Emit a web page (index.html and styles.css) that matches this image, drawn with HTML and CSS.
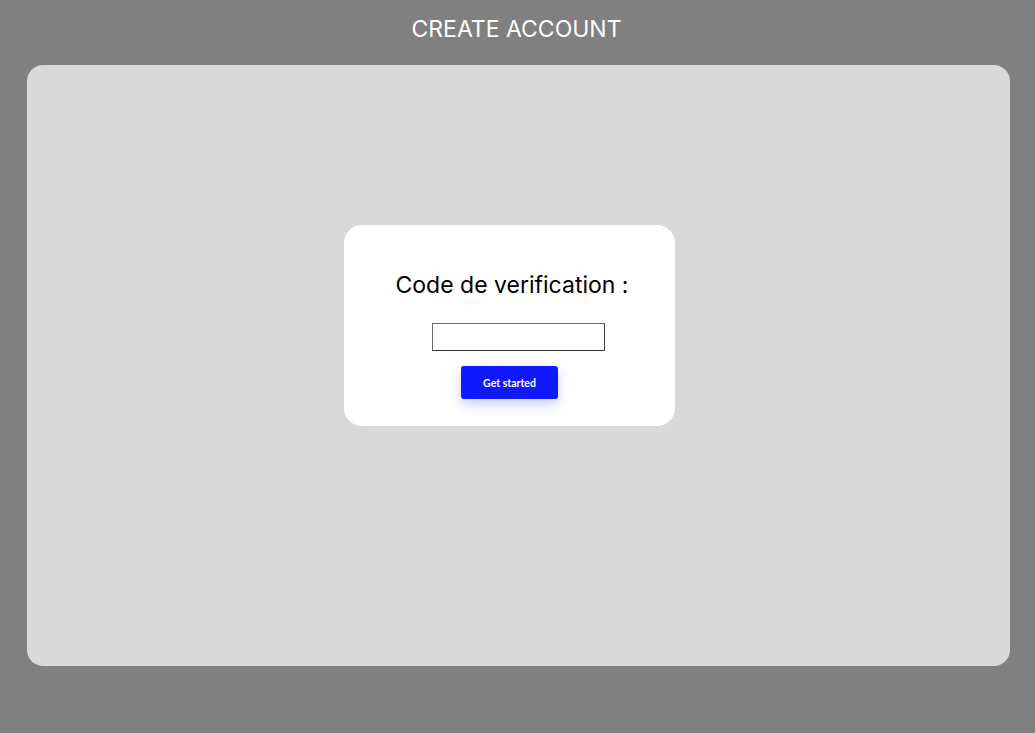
FILE: index.html
```html
<!DOCTYPE html>
<html lang="fr">
<head>
<meta charset="utf-8">
<title>Create account</title>
<link rel="stylesheet" href="styles.css">
</head>
<body>
<div class="page">
  <h1 class="title">CREATE ACCOUNT</h1>
  <main class="panel">
    <form class="card">
      <h2 class="card-heading">Code de verification :</h2>
      <input class="code-input" type="text" aria-label="Code de verification">
      <button class="btn" type="button">Get started</button>
    </form>
  </main>
</div>
</body>
</html>
```

FILE: styles.css
```css
* { box-sizing: border-box; }
html, body { margin: 0; padding: 0; }
body {
  background: #808080;
  font-family: Inter, "Noto Sans", sans-serif;
  width: 1035px;
  height: 733px;
  overflow: hidden;
}
.page {
  display: flex;
  flex-direction: column;
  padding: 15px 25px 0 27px;
}
.title {
  margin: 0;
  font-family: Inter, sans-serif;
  font-weight: 400;
  font-size: 23px;
  line-height: 28px;
  color: #ffffff;
  text-align: center;
  margin-left: -4px;
}
.panel {
  margin-top: 22px;
  height: 601px;
  background: #d9d9d9;
  border-radius: 16px;
  padding: 160px 0 0 317px;
}
.card {
  width: 331px;
  height: 201px;
  background: #ffffff;
  border-radius: 18px;
  display: flex;
  flex-direction: column;
  align-items: center;
  padding: 46px 0 0 0;
}
.card-heading {
  margin: 0;
  font-family: Inter, sans-serif;
  font-weight: 400;
  font-size: 23px;
  line-height: 29px;
  color: #000000;
  margin-left: 5px;
}
.code-input {
  margin-top: 23px;
  margin-left: 18px;
  width: 173px;
  height: 28px;
  border: 1px solid #6a6a6a;
  border-bottom-color: #333;
  border-right-color: #444;
  background: #fff;
  padding: 0 4px;
  font: 14px Inter, sans-serif;
  outline: none;
}
.btn {
  margin-top: 15px;
  width: 97px;
  height: 33px;
  border: none;
  border-radius: 3px;
  background: #0f19fb;
  color: #ffffff;
  font-family: Lato, sans-serif;
  font-weight: 700;
  font-size: 10.5px;
  box-shadow: 0 5px 12px rgba(20, 30, 200, 0.22);
  cursor: pointer;
}
```
